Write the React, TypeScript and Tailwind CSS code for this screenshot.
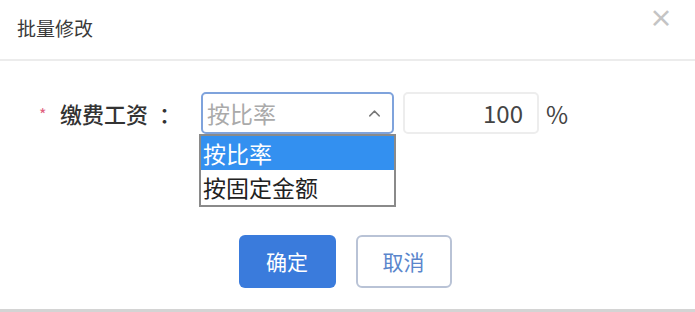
import { ChevronUp } from "lucide-react";

const font = { fontFamily: '"Noto Sans CJK SC", "Noto Sans", sans-serif' };

export default function App() {
  return (
    <div
      className="relative w-[695px] h-[312px] bg-white flex flex-col border-b-[3px] border-[#d4d4d4] overflow-hidden"
      style={font}
    >
      {/* header */}
      <div className="h-[61px] shrink-0 flex items-center justify-between pl-[17px] pr-[22px] border-b-2 border-[#ececec]">
        <span className="text-[19px] text-[#3a3a3a] -mt-[2px]">批量修改</span>
        <span className="self-start mt-[5px] text-[24px] leading-none text-[#c4c4c4] font-bold">×</span>
      </div>

      {/* form row */}
      <div className="flex items-center mt-[31px] pl-[39px] h-[42px]">
        <span className="text-[#e0607e] text-[16px] w-[21px] mt-[2px]">*</span>
        <span className="flex text-[22px] text-[#333] font-medium w-[141px]">
          缴费工资<span className="ml-[11px]">：</span>
        </span>
        <div className="relative">
          <div className="w-[193px] h-[42px] rounded-[5px] border-2 border-[#7fa3dc] flex items-center justify-between pl-[4px] pr-[8px]">
            <span className="text-[23px] text-[#aaaaaa]">按比率</span>
            <ChevronUp className="w-[19px] h-[19px] text-[#777]" strokeWidth={1.8} />
          </div>
          {/* dropdown menu */}
          <div className="absolute left-[-2px] top-[42px] w-[197px] border-2 border-[#8a8a8a] bg-white">
            <div className="h-[34px] bg-[#3390f0] text-white text-[23px] leading-[34px] pl-[2px]">按比率</div>
            <div className="h-[35px] text-[#222] text-[23px] leading-[35px] pl-[2px]">按固定金额</div>
          </div>
        </div>
        <div className="ml-[9px] w-[136px] h-[42px] rounded-[5px] border-2 border-[#ededed] flex items-center justify-end pr-[14px]">
          <span className="text-[24px] text-[#444]">100</span>
        </div>
        <span className="ml-[7px] text-[24px] text-[#444] mt-[2px]">%</span>
      </div>

      {/* buttons */}
      <div className="flex justify-center gap-[20px] mt-[101px] pr-[5px]">
        <button className="w-[97px] h-[53px] rounded-[6px] bg-[#3a7bdc] text-white text-[21px]">确定</button>
        <button className="w-[96px] h-[53px] rounded-[6px] bg-white border-2 border-[#b9c3d6] text-[#5a86cc] text-[21px]">取消</button>
      </div>
    </div>
  );
}
